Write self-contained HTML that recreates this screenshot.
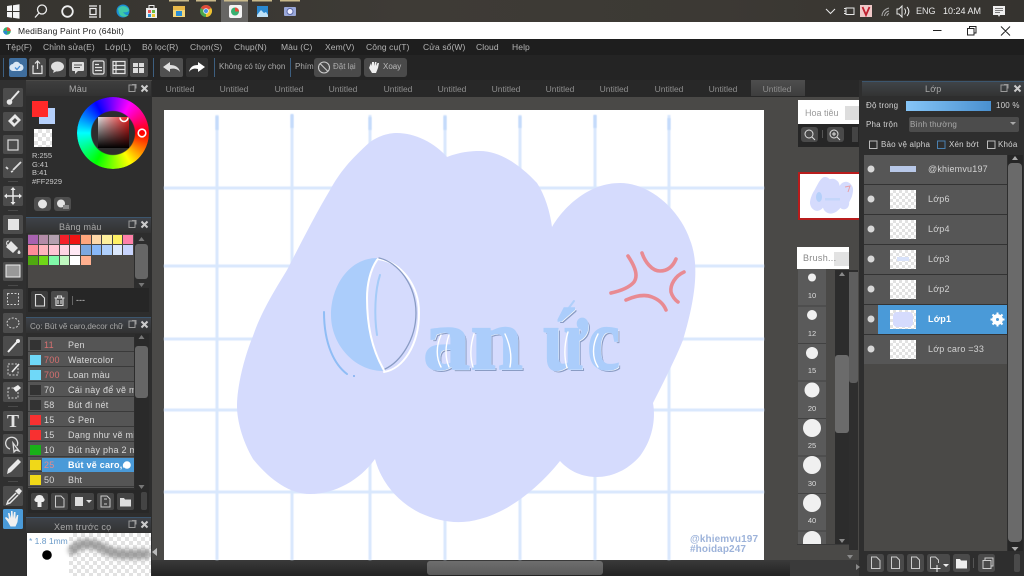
<!DOCTYPE html>
<html lang="vi"><head><meta charset="utf-8"><title>MediBang Paint Pro</title>
<style>
html,body{margin:0;padding:0;width:1024px;height:576px;overflow:hidden;background:#4a4947}
body{position:relative;font-family:"Liberation Sans","Noto Sans CJK SC",sans-serif;font-size:9px;color:#bbb}
.a{position:absolute}
.t{position:absolute;white-space:nowrap;line-height:10px}
.menu .t{top:42px;color:#b4b4b4;letter-spacing:.1px;font-size:8.5px}
.tabs .t{top:84px;color:#8e8e8e;font-size:8.5px;transform:translateX(-50%)}
.hd{color:#a8a8a8;font-size:9px;letter-spacing:.2px}
.br .t{font-size:9px;letter-spacing:.25px;color:#d8d8d8}
.lay .t{font-size:9px;letter-spacing:.2px;color:#d2d2d2}
.sz{position:absolute;left:798px;width:28px;color:#ddd;font-size:7.5px;text-align:center;line-height:9px}
.ck{background:repeating-conic-gradient(#e2e2e2 0 25%,#fff 0 50%) 0 0/8px 8px}
.lt{background-size:6px 6px}
svg{position:absolute;left:0;top:0}
</style></head><body>

<!-- window chrome backgrounds -->
<div class="a" style="left:0;top:0;width:1024px;height:22px;background:linear-gradient(90deg,#36342f,#3e3b36 40%,#3c3934 70%,#35332f)"></div>
<div class="a" style="left:221px;top:0;width:27px;height:22px;background:#676664"></div>
<div class="a" style="left:0;top:22px;width:1024px;height:17px;background:#fff"></div>
<div class="a" style="left:0;top:39px;width:1024px;height:17px;background:#1e1e1e"></div>
<div class="a" style="left:0;top:55px;width:1024px;height:25px;background:#242424"></div>
<div class="a" style="left:152px;top:80px;width:710px;height:17px;background:#282828"></div>
<div class="a" style="left:751px;top:80px;width:54px;height:16px;background:linear-gradient(#4e4e4e,#3e3e3e)"></div>

<!-- left column -->
<div class="a" style="left:0;top:80px;width:26px;height:496px;background:#303030"></div>
<div class="a" style="left:26px;top:81px;width:126px;height:495px;background:#2d2d2d"></div>
<div class="a" style="left:26px;top:81px;width:125px;height:15px;background:linear-gradient(#3e3e3e,#323232)"></div>
<div class="a" style="left:26px;top:217px;width:125px;height:16px;background:linear-gradient(#3e4248,#323232);border-top:1px solid #3c566e;box-sizing:border-box"></div>
<div class="a" style="left:28px;top:234px;width:106px;height:54px;background:#4a4846"></div>
<div class="a" style="left:28px;top:288px;width:121px;height:24px;background:#262626"></div>
<div class="a" style="left:26px;top:317px;width:125px;height:16px;background:linear-gradient(#3e4248,#323232);border-top:1px solid #3c566e;box-sizing:border-box"></div>
<div class="a" style="left:26px;top:517px;width:125px;height:16px;background:linear-gradient(#3e4248,#323232);border-top:1px solid #3c566e;box-sizing:border-box"></div>
<div class="a" style="left:27px;top:533px;width:42px;height:43px;background:#fff"></div>
<div class="a ck" style="left:69px;top:533px;width:82px;height:43px"></div>

<!-- colour wheel -->
<div class="a" style="left:77px;top:97px;width:72px;height:72px;border-radius:50%;background:conic-gradient(from 90deg,#f00,#ff0,#0f0,#0ff,#00f,#f0f,#f00);-webkit-mask:radial-gradient(circle,transparent 21.5px,#000 22.5px);mask:radial-gradient(circle,transparent 21.5px,#000 22.5px)"></div>
<div class="a" style="left:98px;top:117px;width:31px;height:31px;background:linear-gradient(to top,#000,rgba(0,0,0,0)),linear-gradient(to right,#ddd,#f02020)"></div>
<div class="a ck" style="left:34px;top:129px;width:18px;height:18px"></div>
<div class="a" style="left:39px;top:108px;width:16px;height:16px;background:#b5d0fb"></div>
<div class="a" style="left:32px;top:101px;width:16px;height:16px;background:#ff2929"></div>

<!-- palette -->
<div class="a" style="left:28px;top:235px;width:105px;display:grid;grid-template-columns:repeat(10,9.6px);grid-auto-rows:9.4px;gap:1px 1px">
<i style="background:#a862b0"></i><i style="background:#b48ca8"></i><i style="background:#b4a0b0"></i><i style="background:#f5202a"></i><i style="background:#f01414"></i><i style="background:#ffa67c"></i><i style="background:#ffd8a8"></i><i style="background:#fff09c"></i><i style="background:#fff064"></i><i style="background:#ff80a8"></i>
<i style="background:#ff8c98"></i><i style="background:#ffb4bc"></i><i style="background:#ffc4d4"></i><i style="background:#ffd4e4"></i><i style="background:#ffe8f4"></i><i style="background:#7ca8e0"></i><i style="background:#88b8f8"></i><i style="background:#b0d0fc"></i><i style="background:#dce8fc"></i><i style="background:#c8d4fc"></i>
<i style="background:#50a810"></i><i style="background:#70d818"></i><i style="background:#80f8a8"></i><i style="background:#c0f8c0"></i><i style="background:#fff"></i><i style="background:#ffb090"></i>
</div>

<!-- brush list rows -->
<div class="a" style="left:28px;top:337px;width:106px;height:151px;background:repeating-linear-gradient(#555 0 14px,#3a3a3a 14px 15px)"></div>
<div class="a" style="left:42px;top:458px;width:92px;height:14px;background:#4a9ad8"></div>
<div class="a" style="left:135px;top:334px;width:14px;height:156px;background:#2a2a2a"></div>
<div class="a" style="left:28px;top:490px;width:121px;height:23px;background:#282828"></div>

<!-- centre -->
<div class="a" style="left:152px;top:97px;width:710px;height:463px;background:#4a4947"></div>
<div class="a" style="left:164px;top:110px;width:600px;height:450px;background:#fff"></div>
<div class="a" style="left:152px;top:560px;width:710px;height:16px;background:linear-gradient(#3a3a3a,#232323)"></div>
<div class="a" style="left:427px;top:561px;width:176px;height:14px;border-radius:3px;background:linear-gradient(#6e6e6e,#5a5a5a)"></div>

<!-- navigator / brush size -->
<div class="a" style="left:798px;top:100px;width:62px;height:24px;background:#fff"></div>
<div class="a" style="left:845px;top:106px;width:14px;height:14px;background:#ddd"></div>
<div class="a" style="left:798px;top:124px;width:64px;height:23px;background:#262626"></div>
<div class="a" style="left:798px;top:172px;width:64px;height:48px;background:#fff;border:solid #b81c1c;border-width:2px 0 2px 2px;box-sizing:border-box"></div>
<div class="a" style="left:797px;top:247px;width:52px;height:22px;background:#fff"></div>
<div class="a" style="left:834px;top:252px;width:15px;height:14px;background:#e2e2e2"></div>
<div class="a" style="left:798px;top:269px;width:28px;height:275px;background:repeating-linear-gradient(#5a5a5a 0 36.6px,#424242 36.6px 37.5px)"></div>
<div class="a" style="left:835px;top:270px;width:14px;height:274px;background:#2c2c2c"></div>
<div class="a" style="left:835px;top:355px;width:14px;height:78px;border-radius:3px;background:#6b6b6b"></div>
<div class="a" style="left:849px;top:270px;width:9px;height:280px;background:#2e2e2e"></div>
<div class="a" style="left:849px;top:272px;width:9px;height:111px;border-radius:0 0 3px 3px;background:#5e5e5e"></div>
<div class="a" style="left:797px;top:544px;width:52px;height:1px;background:#3a3a3a"></div>
<div class="a" style="left:790px;top:560px;width:72px;height:16px;background:#3a3a3a"></div>

<!-- layer panel -->
<div class="a" style="left:859px;top:80px;width:165px;height:496px;background:#2e2e2e"></div>
<div class="a" style="left:862px;top:81px;width:162px;height:15px;background:linear-gradient(#3f4448,#333);border-top:1px solid #3c566e;box-sizing:border-box"></div>
<div class="a" style="left:906px;top:101px;width:85px;height:10px;background:linear-gradient(90deg,#86c6f8,#4a90cf)"></div>
<div class="a" style="left:909px;top:117px;width:110px;height:15px;border-radius:2px;background:#4c4c4c"></div>
<div class="a" style="left:864px;top:155px;width:143px;height:396px;background:#4a4947"></div>
<div class="a" style="left:864px;top:155px;width:143px;height:209px;background:repeating-linear-gradient(#565656 0 29px,#333 29px 30px)"></div>
<div class="a" style="left:878px;top:305px;width:129px;height:29px;background:#4a9ad8"></div>
<div class="a" style="left:1008px;top:155px;width:15px;height:396px;background:#262626"></div>
<div class="a" style="left:1008px;top:163px;width:14px;height:379px;border-radius:4px;background:#6a6a6a"></div>
<div class="a ck lt" style="left:890px;top:190px;width:26px;height:19px"></div>
<div class="a ck lt" style="left:890px;top:220px;width:26px;height:19px"></div>
<div class="a ck lt" style="left:890px;top:250px;width:26px;height:19px"></div>
<div class="a ck lt" style="left:890px;top:280px;width:26px;height:19px"></div>
<div class="a ck lt" style="left:890px;top:310px;width:26px;height:19px"></div>
<div class="a ck lt" style="left:890px;top:340px;width:26px;height:19px"></div>
<div class="a" style="left:890px;top:166px;width:26px;height:6px;background:#b8c8e8"></div>

<svg width="1024" height="576" viewBox="0 0 1024 576">
<title>Oan ức</title>
<!-- grid -->
<g stroke="#d8e7fd" stroke-width="3" fill="none" style="filter:blur(.5px)">
<path d="M217 115V560M292 115V560M370 115V560M445 115V560M520 115V560M595 115V560M669 115V560"/>
<path d="M164 188H764M164 266H764M164 339H764M164 410H764M164 492H764"/>
</g>
<g stroke="#c4dafb" stroke-width="3" style="filter:blur(.5px)"><path d="M217 116V130M292 114V128M370 117V130M445 116V130M520 116V128M595 115V128M669 118V130"/></g>
<!-- blob -->
<path id="blob" fill="#d5dbfd" d="M253 336C262 310 275 290 287 270C300 245 315 215 330 190C340 172 350 160 370 142C380 135 390 133 397 133C415 133 435 143 447 157C460 152 470 151 480 151C500 151 520 165 537 183C545 195 550 212 552 227C565 205 590 183 620 183C650 183 680 210 690 240C700 265 695 300 683 340C675 360 662 385 653 403C656 420 652 440 640 456C628 470 612 477 597 477C583 477 570 472 560 461C545 480 515 510 480 519C460 525 440 522 420 513C400 503 382 485 375 459C360 480 335 494 310 494C290 494 270 480 253 459C242 440 237 420 237 406C237 385 245 355 253 336Z"/>
<!-- O drawing -->
<path fill="#abcdfb" d="M377 258C350 258 331 285 331 315C331 345 355 371 383 371C372 350 367 325 367 298C367 282 371 268 377 258Z"/>
<g fill="none" stroke-linecap="round">
<path stroke="#fff" stroke-width="2" d="M378 259C401 262 419 285 419 313C419 345 403 369 384 372M377 260C370 270 367 285 367 298C367 325 372 350 384 370"/>
<path stroke="#8a9cc4" stroke-width="1.3" d="M379 258C398 262 416 285 416 313C416 340 400 362 385 369"/>
<path stroke="#8fbdf5" stroke-width="2" d="M324 312C324 345 335 365 347 374"/>
<path stroke="#a5cbf8" stroke-width="2" d="M380 275C375 290 374 315 377 335"/>
<path stroke="#b0cffa" stroke-width="2" d="M574 301L568 309"/>
</g>
<circle cx="354" cy="376" r="1" fill="#7fb0f0"/>
<!-- lettering, real text -->
<g font-family="'Liberation Serif',serif" font-weight="700" font-size="88">
<text x="425" y="371" textLength="100" lengthAdjust="spacingAndGlyphs" fill="#8a9cc4">an</text>
<text x="545" y="371" textLength="77" lengthAdjust="spacingAndGlyphs" fill="#8a9cc4">ức</text>
<text x="424" y="370" textLength="100" lengthAdjust="spacingAndGlyphs" fill="#fff">an</text>
<text x="544" y="370" textLength="77" lengthAdjust="spacingAndGlyphs" fill="#fff">ức</text>
<text x="423" y="369" textLength="100" lengthAdjust="spacingAndGlyphs" fill="#abcdfb" stroke="#abcdfb" stroke-width="1.5">an</text>
<text x="543" y="369" textLength="77" lengthAdjust="spacingAndGlyphs" fill="#abcdfb" stroke="#abcdfb" stroke-width="1.5">ức</text>
</g>
<g fill="none" stroke="#fff" stroke-width="1.4" stroke-linecap="round"><path d="M441 335C436 346 436 358 441 367M449 335C445 346 445 358 449 367M474 334C470 346 470 358 473 367M505 334C510 345 512 357 510 367M568 332C564 345 564 357 567 368M598 334C592 345 592 358 598 367"/></g>
<!-- anger mark -->
<g fill="none" stroke="#e88a92" stroke-width="3.6" stroke-linecap="round">
<path d="M628 256C636 268 638 276 634 282C629 288 620 291 611 293"/>
<path d="M642 253C645 262 652 271 660 271C668 271 673 266 676 259"/>
<path d="M684 272C675 276 670 285 671 292C672 296 675 300 678 302"/>
<path d="M626 300C635 296 645 294 652 297C660 300 664 305 666 310"/>
</g>
<!-- thumbnail -->
<g transform="translate(787.7 164.5) scale(.094)"><use href="#blob"/></g>
<g fill="none" stroke="#e8a0a8" stroke-width="1"><path d="M845 187l5 -1l-2 6"/></g>
<ellipse cx="819" cy="197" rx="3" ry="5" fill="#b4d0fa"/>
<rect x="825" y="198" width="15" height="2.500" fill="#c4d6fa"/>
<!-- Lớp1 / Lớp3 thumbs -->
<rect x="893" y="312" width="20" height="15" rx="4" fill="#d5dbfd"/>
<rect x="897" y="257" width="12" height="4" fill="#d8e2fa"/>

<!-- taskbar top highlight -->
<g fill="#c9b98a"><rect x="169" y="0" width="20" height="1.5"/><rect x="196" y="0" width="20" height="1.5"/><rect x="224" y="0" width="24" height="1.5"/><rect x="252" y="0" width="20" height="1.5"/><rect x="280" y="0" width="20" height="1.5"/></g>
<!-- win logo -->
<path fill="#f4f4f4" d="M7 6l5-.7V11H7zM13 5.2L19.5 4.3V11H13zM7 12h5v5.700L7 17zM13 12h6.500v6.700L13 17.800z"/>
<!-- search, cortana, taskview -->
<g fill="none" stroke="#eee" stroke-width="1.300">
<circle cx="42" cy="9.500" r="4.500"/><path d="M39 13l-4 4.500"/>
<circle cx="67.500" cy="11.500" r="5.300" stroke-width="1.800"/>
<path d="M89 6h8M89 17h8M90 8.500h6v6h-6zM100 5v13" /></g>
<!-- edge -->
<circle cx="123" cy="11" r="6.500" fill="#1c8fd4"/><path d="M118 9c2-4 9-4 11 1c0 2-4 3-6 2c2 3 5 4 6 3c-3 3-9 2-10-2" fill="#3fc8a8"/>
<!-- store -->
<rect x="146" y="8" width="11" height="10" fill="#eee"/><path d="M149 8V5.500h5V8" fill="none" stroke="#eee"/><rect x="148" y="10" width="3" height="3" fill="#e55"/><rect x="152" y="10" width="3" height="3" fill="#6b4"/><rect x="148" y="14" width="3" height="3" fill="#39d"/><rect x="152" y="14" width="3" height="3" fill="#ec3"/>
<!-- folder -->
<rect x="173" y="6" width="12" height="11" fill="#e8b84a"/><rect x="173" y="10" width="12" height="7" fill="#f4d678"/><rect x="176" y="11" width="6" height="5" fill="#2a8fd8"/>
<!-- chrome -->
<circle cx="206" cy="11" r="6" fill="#4aa84e"/><path d="M206 11L200.800 8A6 6 0 0 1 211.200 8z" fill="#e04a3a"/><path d="M206 11l5.200-3A6 6 0 0 1 206 17z" fill="#f0c030"/><circle cx="206" cy="11" r="2.400" fill="#4a8fe8" stroke="#eee" stroke-width=".8"/>
<!-- medibang -->
<rect x="229" y="5" width="13" height="13" rx="2" fill="#f4f4f4"/><circle cx="235" cy="11.500" r="4" fill="#38b070"/><path d="M235 7.500a4 4 0 0 1 4 4h-4z" fill="#e84a3a"/>
<!-- photos, camera -->
<rect x="257" y="6" width="11" height="11" fill="#2a88d0"/><path d="M257 15l4-5 3 3 2-1 2 3v2h-11z" fill="#bfe2f8"/>
<rect x="284" y="7" width="12" height="9" rx="1" fill="#9aa8d8"/><circle cx="290" cy="11.500" r="3" fill="#eef" stroke="#5a68a8"/>
<!-- tray -->
<g fill="none" stroke="#e8e8e8" stroke-width="1">
<path d="M826 9l4.500 4.500L835 9"/>
<rect x="846" y="8" width="8" height="6.500"/><path d="M844 8.500h2M844 11h2M844 13.500h2"/>
<path d="M882 16c0-4 3-7 7-8M884.500 16c0-2.500 2-4.500 4.500-5M887 16c0-1 .8-2 2-2.500" stroke="#aaa"/>
<path d="M897 9h2l3-3v11l-3-3h-2zM904.500 8.500c1.500 2 1.500 4 0 6M907 7c2.500 3 2.500 6 0 9"/>
</g>
<rect x="860" y="5" width="12" height="12" fill="#f0c8c8"/><path d="M862.500 7l3.500 8 3.500-8" fill="none" stroke="#c02030" stroke-width="1.800"/>
<path fill="#eee" d="M993 6h12v9h-5l-1 2-1-2h-5z"/><path stroke="#555" stroke-width=".8" d="M995 8.500h8M995 10.500h8M995 12.500h5"/>
<!-- title bar icon & window controls -->
<circle cx="7" cy="31" r="3.800" fill="#38b070"/><path d="M7 27.200a3.800 3.800 0 0 1 3.800 3.800H7z" fill="#e84a3a"/><path d="M3.200 31a3.800 3.800 0 0 0 3.800 3.800V31z" fill="#2a88d0"/>
<path stroke="#222" fill="none" d="M933 30.500h8.500M967.500 28.500h6.500v6.500h-6.500zM969.500 28.500v-2h6.500v6.500h-2M1001 26.500l9 9M1010 26.500l-9 9"/>

<!-- top toolbar buttons -->
<g fill="#4a4a4a">
<rect x="9" y="58" width="18" height="19" rx="2" fill="#3f6e9e"/><rect x="29" y="58" width="17" height="19" rx="2"/><rect x="49" y="58" width="17" height="19" rx="2"/><rect x="69" y="58" width="18" height="19" rx="2"/><rect x="90" y="58" width="17" height="19" rx="2"/><rect x="110" y="58" width="18" height="19" rx="2"/><rect x="130" y="58" width="18" height="19" rx="2"/>
<rect x="160" y="58" width="23" height="19" rx="2" fill="#505050"/><rect x="186" y="58" width="22" height="19" rx="2" fill="#333"/>
<rect x="314" y="58" width="47" height="19" rx="3"/><rect x="364" y="58" width="43" height="19" rx="3"/>
</g>
<g stroke="#3d5f80" stroke-width="1"><path d="M3.500 58v19M153.500 58v19M214.500 58v19M290.500 58v19"/></g>
<path fill="#dbe8f5" d="M13 71a3.500 3.500 0 0 1 0-7c1-3 6-3 7 0a3.500 3.500 0 0 1 0 7z"/><path fill="none" stroke="#4a90d8" stroke-width="1.300" d="M15 67.500l2 2 3-3.500"/>
<g fill="none" stroke="#e4e4e4" stroke-width="1.200">
<path d="M34 66h-1v7.500h9V66h-1M37.500 69V61M35 63.500l2.500-2.500 2.500 2.500"/>
<rect x="93" y="61" width="11" height="13" rx="1.500"/><path d="M95 67.500h7M95 70.500h7M95 64.500h4"/>
<path d="M113 61.500h12v12h-12zM113 65.500h12M113 69.500h12M116 61.500v12"/>
</g>
<ellipse cx="57.500" cy="66.500" rx="6.500" ry="5" fill="#e0e0e0"/><path d="M54 70l-1 3 4-2z" fill="#e0e0e0"/>
<rect x="72" y="62" width="12" height="9" rx="1" fill="#e0e0e0"/><path d="M75 71v3l3-3z" fill="#e0e0e0"/><path stroke="#555" d="M74 65h8M74 67.500h6"/>
<path fill="#ddd" d="M133 63h5v4h-5zM139 63h5v4h-5zM133 68h5v5h-5zM139 68h5v5h-5z"/>
<path fill="#e0e0e0" d="M163 67l7-5v3c5 0 9 2 10 7c-2-3-6-4-10-3v3z"/>
<path fill="#fff" d="M205 67l-7-5v3c-5 0-8 2-9 7c2-3 5-4 9-3v3z"/>
<g fill="none" stroke="#ccc" stroke-width="1.100"><circle cx="324" cy="67.500" r="5.500"/><path d="M320 63.500l8 8"/></g>
<path fill="#eee" d="M369 68l2-5 1 3v-4h2v4l1-4h1.500l-.5 4 1.500-3h1.500l-1 5-2 5h-4z"/>

<!-- left tools -->
<g fill="#4c4c4c">
<rect x="3" y="88" width="20" height="19" rx="1.500"/><rect x="3" y="112" width="20" height="19" rx="1.500"/><rect x="3" y="135" width="20" height="19" rx="1.500"/><rect x="3" y="158" width="20" height="20" rx="1.500"/>
<rect x="3" y="186" width="20" height="20" rx="1.500"/><rect x="3" y="215" width="20" height="19" rx="1.500"/><rect x="3" y="238" width="20" height="20" rx="1.500"/><rect x="3" y="262" width="20" height="19" rx="1.500"/>
<rect x="3" y="289" width="20" height="20" rx="1.500"/><rect x="3" y="313" width="20" height="20" rx="1.500"/><rect x="3" y="336" width="20" height="20" rx="1.500"/><rect x="3" y="359" width="20" height="20" rx="1.500"/><rect x="3" y="382" width="20" height="20" rx="1.500"/>
<rect x="3" y="411" width="20" height="20" rx="1.500"/><rect x="3" y="434" width="20" height="20" rx="1.500"/><rect x="3" y="457" width="20" height="20" rx="1.500"/><rect x="3" y="486" width="20" height="20" rx="1.500"/>
<rect x="3" y="509" width="20" height="20" rx="1.500" fill="#4a9ad8"/>
</g>
<g stroke="#4a4a4a"><path d="M8 181.500h10M8 210.500h10M8 285.500h10M8 406.500h10M8 481.500h10"/></g>
<!-- pen -->
<path stroke="#e8e8e8" stroke-width="2" d="M19 91l-8 9"/><circle cx="9.500" cy="102" r="2.800" fill="#e8e8e8"/>
<!-- eraser -->
<path fill="#e8e8e8" d="M15 114l6 6-7 7-6-6z"/><path fill="#4c4c4c" d="M15 118l2.500 2.500-3 3-2.500-2.500z"/>
<rect x="8" y="140" width="10" height="10" fill="none" stroke="#ddd" stroke-width="1.200"/>
<path fill="none" stroke="#ddd" stroke-width="1.800" d="M6 167l2 2M11 172l2-1M13 170l8-8"/>
<!-- move -->
<path fill="none" stroke="#e8e8e8" stroke-width="1.500" d="M13 188v16M5 196h16"/><path fill="#e8e8e8" d="M13 187l-2.500 3h5zM13 205l-2.500-3h5zM4 196l3-2.500v5zM22 196l-3-2.500v5z"/>
<rect x="8" y="219" width="11" height="11" fill="#e4e4e4"/>
<!-- bucket -->
<path fill="#e4e4e4" d="M11 241l7 7-5 5-7-6z"/><path d="M9 241c-3 0-3 3-1 5" fill="none" stroke="#e4e4e4"/><path fill="#e4e4e4" d="M19 250c2 2 2 4 0 4s-2-2 0-4z"/>
<rect x="6" y="265" width="14" height="12" fill="#999" stroke="#eee"/>
<g fill="none" stroke="#ccc" stroke-dasharray="2 1.500"><rect x="7.500" y="293.500" width="11" height="11"/><ellipse cx="13" cy="323" rx="6" ry="5"/><rect x="8" y="364" width="10" height="11"/><rect x="8" y="388" width="10" height="10"/></g>
<path stroke="#eee" stroke-width="2" d="M8 352l9-10"/><circle cx="18" cy="341" r="2" fill="#eee"/>
<path stroke="#eee" stroke-width="1.600" d="M12 372l7-8"/>
<path fill="#eee" d="M13 388l5-3 3 3-5 4z"/>
<text x="13" y="427" font-family="Liberation Serif,serif" font-weight="700" font-size="18" fill="#e4e4e4" text-anchor="middle">T</text>
<path fill="none" stroke="#ddd" stroke-width="1.300" d="M17 446a6 6 0 1 0-7 3M13 443l6 8-3-1-2 2z"/>
<path fill="#e8e8e8" d="M18 459l3 3-10 10-4 2 1-5z"/>
<path fill="none" stroke="#e8e8e8" stroke-width="1.500" d="M16 493l-8 8-1 3 3-1 8-8"/><path fill="#e8e8e8" d="M15 491l4-3 3 3-3 4z"/>
<path fill="#f0f0f0" d="M8 522l-3-4 1-1 3 2-1-6h1.500l1.500 5v-7h1.500l.5 7 1-6h1.500v7l1.500-4h1.300l-.8 7-2 4.500h-5z"/>

<!-- panel header icons -->
<g id="hdi" fill="none" stroke="#9a9a9a" stroke-width="1"><rect x="129" y="85" width="6" height="6.500"/><path d="M132 84.500h4v4"/></g>
<path stroke="#ccc" stroke-width="2" d="M141.500 85.500l6 6M147.500 85.500l-6 6"/>
<use href="#hdi" y="136"/><path stroke="#ccc" stroke-width="2" d="M141.500 221.500l6 6M147.500 221.500l-6 6"/>
<use href="#hdi" y="236"/><path stroke="#ccc" stroke-width="2" d="M141.500 321.500l6 6M147.500 321.500l-6 6"/>
<use href="#hdi" y="436"/><path stroke="#ccc" stroke-width="2" d="M141.500 521.500l6 6M147.500 521.500l-6 6"/>
<use href="#hdi" x="872" y="0"/><path stroke="#ccc" stroke-width="2" d="M1014.500 85.500l6 6M1020.500 85.500l-6 6"/>

<!-- colour handles -->
<circle cx="142" cy="133" r="3.800" fill="none" stroke="#fff" stroke-width="1.600"/>
<path d="M120 117.500a4 4 0 0 0 8 0" fill="none" stroke="#fff" stroke-width="1.500"/>
<rect x="34" y="197" width="17" height="14" rx="3" fill="#4e4e4e"/><rect x="54" y="197" width="17" height="14" rx="3" fill="#4e4e4e"/>
<circle cx="42.500" cy="204" r="4.500" fill="#e4e4e4"/><circle cx="61" cy="203.500" r="4" fill="#e4e4e4"/><rect x="63" y="205" width="6" height="4" fill="#888"/>
<!-- palette scrollbar -->
<path fill="#777" d="M141.500 237l3 4h-6zM141.500 287l3-4h-6z"/>
<rect x="135" y="244" width="13" height="35" rx="3" fill="#666"/>
<rect x="31" y="291" width="17" height="18" rx="2" fill="#3c3c3c"/><rect x="51" y="291" width="17" height="18" rx="2" fill="#4a4a4a"/>
<path fill="none" stroke="#ddd" stroke-width="1.100" d="M35.500 294.500h5.500l3.500 3.500v8h-9zM54.500 298h10M56 298v7.500h7V298M58 300v4M61 300v4M57.500 298v-2h4v2"/>
<path stroke="#666" d="M72.500 296v9"/>
<!-- brush swatches -->
<g><rect x="30" y="340" width="11" height="10" fill="#333"/><rect x="30" y="355" width="11" height="10" fill="#6fd8f8"/><rect x="30" y="370" width="11" height="10" fill="#6fd8f8"/><rect x="30" y="385" width="11" height="10" fill="#333"/><rect x="30" y="400" width="11" height="10" fill="#333"/><rect x="30" y="415" width="11" height="10" fill="#f83030"/><rect x="30" y="430" width="11" height="10" fill="#f83030"/><rect x="30" y="445" width="11" height="10" fill="#18b018"/><rect x="30" y="460" width="11" height="10" fill="#f0d818"/><rect x="30" y="475" width="11" height="10" fill="#f0d818"/></g>
<circle cx="127" cy="465" r="3.800" fill="#fff"/>
<path fill="#777" d="M141.500 335l3 4h-6zM141.500 489l-3-4h6z"/>
<rect x="135" y="346" width="13" height="52" rx="3" fill="#666"/>
<!-- brush bottom buttons -->
<g fill="#444"><rect x="31" y="493" width="17" height="17" rx="2"/><rect x="51" y="493" width="17" height="17" rx="2"/><rect x="71" y="493" width="23" height="17" rx="2"/><rect x="97" y="493" width="17" height="17" rx="2"/><rect x="117" y="493" width="17" height="17" rx="2"/><rect x="141" y="492" width="6" height="18" rx="2"/></g>
<path fill="#eee" d="M39.500 495c3 0 4 2 4 3c2 1 1 4-1 4h-1v5h-4v-5h-1c-2 0-3-3-1-4c0-1 1-3 4-3z"/>
<path fill="none" stroke="#ccc" d="M55.500 496h5.500l3 3v8h-8.500zM101 496h6l3 3v8h-9zM104 499h3M104 504h3"/>
<rect x="75" y="497" width="8" height="9" fill="#ddd"/><path d="M86 500h6l-3 3z" fill="#ddd"/>
<path fill="#ddd" d="M120 498h4l1 1.500h6v7h-11z"/>
<!-- preview -->
<circle cx="47" cy="555" r="4.800" fill="#000"/>
<path d="M73 550C80 542 92 542 104 549C114 555 130 555 146 554" fill="none" stroke="#808080" stroke-width="10" stroke-linecap="round" opacity=".7" style="filter:blur(2px)"/>
<path fill="#bbb" d="M152 552l5-4v8z"/>

<!-- navigator buttons -->
<rect x="801" y="127" width="17" height="15" rx="3" fill="#4a4a4a"/><rect x="827" y="127" width="17" height="15" rx="3" fill="#4a4a4a"/><rect x="852" y="127" width="6" height="15" fill="#444"/>
<g fill="none" stroke="#ddd"><circle cx="809" cy="134" r="4"/><path d="M812 137l3 3"/><circle cx="834" cy="134" r="4"/><path d="M837 137l3 3M832 134h4M834 132v4"/></g>
<path stroke="#555" d="M822.500 130v8"/>
<!-- brush sizes -->
<g fill="#f0f0f0"><circle cx="812" cy="277.500" r="4"/><circle cx="812" cy="315" r="5"/><circle cx="812" cy="353" r="6"/><circle cx="812" cy="390" r="7.500"/><circle cx="812" cy="428" r="9"/><circle cx="812" cy="465" r="9"/><circle cx="812" cy="503" r="9"/><path d="M803 544v-4a9 9 0 0 1 18 0v4z"/></g>
<path fill="#8a8a8a" d="M842 272l-3 4h6zM842 543l-3-4h6zM850 559l-3-4h6zM860 567l-4-3v6z"/>
<!-- layer panel pieces -->
<g fill="none" stroke="#bbb"><rect x="869.500" y="141" width="7.500" height="7.500"/><rect x="987.500" y="141" width="7.500" height="7.500"/><rect x="937.500" y="141" width="7.500" height="7.500" stroke="#4a80b0"/></g>
<path d="M1010 122l3 3 3-3z" fill="#aaa"/>
<g fill="#d8d8d8"><circle cx="871" cy="169" r="3.500"/><circle cx="871" cy="199" r="3.500"/><circle cx="871" cy="229" r="3.500"/><circle cx="871" cy="259" r="3.500"/><circle cx="871" cy="289" r="3.500"/><circle cx="871" cy="319" r="3.500"/><circle cx="871" cy="349" r="3.500"/></g>
<circle cx="997.500" cy="319.500" r="3.800" fill="none" stroke="#fff" stroke-width="3.200" /><path stroke="#fff" stroke-width="2" d="M997.500 312.500v14M990.500 319.500h14M992.500 314.500l10 10M1002.500 314.500l-10 10"/><circle cx="997.500" cy="319.500" r="1.500" fill="#4a9ad8"/>
<path fill="#aaa" d="M1015 156l3 4h-6zM1015 551l-3.500-4h7z"/>
<g fill="#4a4a4a"><rect x="867" y="554" width="17" height="18" rx="2.500"/><rect x="887" y="554" width="17" height="18" rx="2.500"/><rect x="907" y="554" width="17" height="18" rx="2.500"/><rect x="927" y="554" width="23" height="18" rx="2.500"/><rect x="953" y="554" width="17" height="18" rx="2.500"/><rect x="978" y="554" width="17" height="18" rx="2.500"/><rect x="1014" y="554" width="6" height="18" rx="2"/></g>
<g fill="none" stroke="#ccc"><path d="M871.500 557h5l3.500 3.500v8h-8.500zM891.500 557h5l3 3v8.500h-8zM911.500 557h5l3 3v8.500h-8zM930.500 557h5l3 3v3M930.500 557v11.500h5"/><path d="M983 560.500h8v8h-8zM985 560.500v-2.500h8v8h-2"/></g>
<path stroke="#eee" d="M937 565v7M933.500 568.500h7"/><path fill="#eee" d="M943 564h6l-3 3zM956 559h4l1 1.500h6v8h-11z"/>
<path stroke="#555" d="M973.500 558v10"/>
</svg>

<!-- taskbar / title text -->
<div class="t" style="left:916px;top:6px;color:#e4e4e4;font-size:9px">ENG</div>
<div class="t" style="left:943px;top:6px;color:#eee;font-size:9px">10:24 AM</div>
<div class="t" style="left:18px;top:26px;color:#222;font-size:8.5px;letter-spacing:.15px">MediBang Paint Pro (64bit)</div>

<div class="menu">
<span class="t" style="left:6px">Tệp(F)</span><span class="t" style="left:43px">Chỉnh sửa(E)</span><span class="t" style="left:105px">Lớp(L)</span><span class="t" style="left:142px">Bộ lọc(R)</span><span class="t" style="left:190px">Chọn(S)</span><span class="t" style="left:234px">Chụp(N)</span><span class="t" style="left:281px">Màu (C)</span><span class="t" style="left:325px">Xem(V)</span><span class="t" style="left:366px">Công cụ(T)</span><span class="t" style="left:423px">Cửa sổ(W)</span><span class="t" style="left:476px">Cloud</span><span class="t" style="left:512px">Help</span>
</div>
<div class="t" style="left:219px;top:62px;font-size:8px;color:#aaa">Không có tùy chọn</div>
<div class="t" style="left:295px;top:62px;font-size:8px;color:#aaa">Phím</div>
<div class="t" style="left:333px;top:62px;font-size:8px;color:#aaa">Đặt lại</div>
<div class="t" style="left:383px;top:62px;font-size:8px;color:#bbb">Xoay</div>

<div class="tabs">
<span class="t" style="left:180px">Untitled</span><span class="t" style="left:234px">Untitled</span><span class="t" style="left:289px">Untitled</span><span class="t" style="left:343px">Untitled</span><span class="t" style="left:398px">Untitled</span><span class="t" style="left:452px">Untitled</span><span class="t" style="left:506px">Untitled</span><span class="t" style="left:560px">Untitled</span><span class="t" style="left:614px">Untitled</span><span class="t" style="left:669px">Untitled</span><span class="t" style="left:723px">Untitled</span><span class="t" style="left:777px">Untitled</span>
</div>

<div class="t hd" style="left:69px;top:84px">Màu</div>
<div class="t" style="left:32px;top:152px;color:#c8c8c8;font-size:7.5px;line-height:8.700px;white-space:pre">R:255
G:41
B:41
#FF2929</div>
<div class="t hd" style="left:59px;top:222px">Bảng màu</div>
<div class="t" style="left:76px;top:295px;color:#ccc">---</div>
<div class="t hd" style="left:30px;top:322px;font-size:8px;letter-spacing:0;width:100px;overflow:hidden">Cọ: Bút vẽ caro,decor chữ</div>

<div class="br">
<span class="t" style="left:44px;top:340px;color:#d87070">11</span><span class="t" style="left:68px;top:340px">Pen</span>
<span class="t" style="left:44px;top:355px;color:#d87070">700</span><span class="t" style="left:68px;top:355px">Watercolor</span>
<span class="t" style="left:44px;top:370px;color:#d87070">700</span><span class="t" style="left:68px;top:370px">Loan màu</span>
<span class="t" style="left:44px;top:385px">70</span><span class="t" style="left:68px;top:385px;width:66px;overflow:hidden">Cái này để vẽ mi</span>
<span class="t" style="left:44px;top:400px">58</span><span class="t" style="left:68px;top:400px">Bút đi nét</span>
<span class="t" style="left:44px;top:415px">15</span><span class="t" style="left:68px;top:415px">G Pen</span>
<span class="t" style="left:44px;top:430px">15</span><span class="t" style="left:68px;top:430px;width:66px;overflow:hidden">Dạng như vẽ mi</span>
<span class="t" style="left:44px;top:445px">10</span><span class="t" style="left:68px;top:445px;width:66px;overflow:hidden">Bút này pha 2 m</span>
<span class="t" style="left:44px;top:460px;color:#e88a8a">25</span><span class="t" style="left:68px;top:460px;width:56px;overflow:hidden;color:#fff;font-weight:700">Bút vẽ caro,de</span>
<span class="t" style="left:44px;top:475px">50</span><span class="t" style="left:68px;top:475px">Bht</span>
</div>

<div class="t hd" style="left:54px;top:522px">Xem trước cọ</div>
<div class="t" style="left:29px;top:536px;color:#6a9ac8;font-size:8.500px">* 1.8 1mm</div>

<div class="t" style="left:805px;top:108px;color:#999;font-size:9px">Hoa tiêu</div>
<div class="t" style="left:803px;top:253px;color:#888;font-size:9px;letter-spacing:.3px">Brush...</div>
<div class="sz" style="top:291px">10</div><div class="sz" style="top:329px">12</div><div class="sz" style="top:366px">15</div><div class="sz" style="top:404px">20</div><div class="sz" style="top:441px">25</div><div class="sz" style="top:479px">30</div><div class="sz" style="top:516px">40</div>

<div class="t" style="left:690px;top:535px;color:#9db3da;font-weight:700;font-size:10px;letter-spacing:.1px;line-height:9.500px;white-space:pre">@khiemvu197
#hoidap247</div>

<div class="t hd" style="left:925px;top:84px">Lớp</div>
<div class="lay">
<span class="t" style="left:866px;top:101px;font-size:8px">Độ trong</span>
<span class="t" style="left:996px;top:101px;font-size:8px">100 %</span>
<span class="t" style="left:866px;top:120px;font-size:8px">Pha trộn</span>
<span class="t" style="left:910px;top:120px;font-size:8px;color:#aaa">Bình thường</span>
<span class="t" style="left:881px;top:140px;font-size:8px">Bảo vệ alpha</span>
<span class="t" style="left:949px;top:140px;font-size:8px">Xén bớt</span>
<span class="t" style="left:998px;top:140px;font-size:8px">Khóa</span>
<span class="t" style="left:928px;top:164px">@khiemvu197</span>
<span class="t" style="left:928px;top:194px">Lớp6</span>
<span class="t" style="left:928px;top:224px">Lớp4</span>
<span class="t" style="left:928px;top:254px">Lớp3</span>
<span class="t" style="left:928px;top:284px">Lớp2</span>
<span class="t" style="left:928px;top:314px;color:#fff;font-weight:700">Lớp1</span>
<span class="t" style="left:928px;top:344px">Lớp caro =33</span>
</div>
</body></html>
